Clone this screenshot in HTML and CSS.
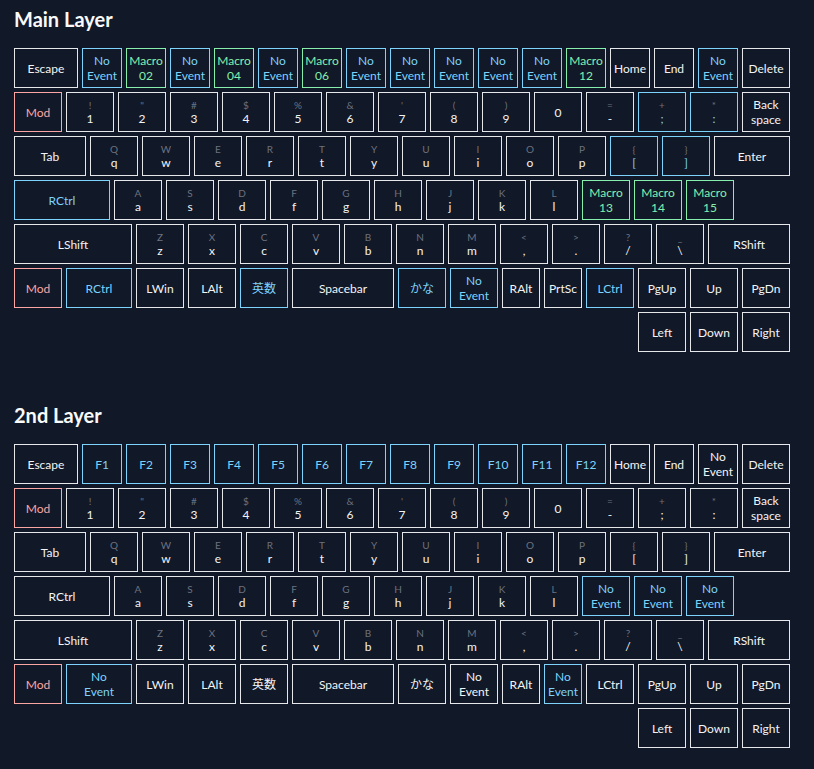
FILE: index.html
```html
<!DOCTYPE html>
<html lang="ja">
<head>
	<meta charset="UTF-8">
	<title>Keymap</title>
	<link rel="stylesheet" href="styles.css">
</head>
<body>

<div class="layer">
	<h2>Main Layer</h2>
	<div class="board">
		<div class="row">
			<div class="key w64">Escape</div>
			<div class="key w40 blue">No<br>Event</div>
			<div class="key w40 green">Macro<br>02</div>
			<div class="key w40 blue">No<br>Event</div>
			<div class="key w40 green">Macro<br>04</div>
			<div class="key w40 blue">No<br>Event</div>
			<div class="key w40 green">Macro<br>06</div>
			<div class="key w40 blue">No<br>Event</div>
			<div class="key w40 blue">No<br>Event</div>
			<div class="key w40 blue">No<br>Event</div>
			<div class="key w40 blue">No<br>Event</div>
			<div class="key w40 blue">No<br>Event</div>
			<div class="key w40 green">Macro<br>12</div>
			<div class="key w40">Home</div>
			<div class="key w40">End</div>
			<div class="key w40 blue">No<br>Event</div>
			<div class="key w48">Delete</div>
		</div>
		<div class="row">
			<div class="key w48 red">Mod</div>
			<div class="key w48"><span class="sub">!</span>1</div>
			<div class="key w48"><span class="sub">"</span>2</div>
			<div class="key w48"><span class="sub">#</span>3</div>
			<div class="key w48"><span class="sub">$</span>4</div>
			<div class="key w48"><span class="sub">%</span>5</div>
			<div class="key w48"><span class="sub">&amp;</span>6</div>
			<div class="key w48"><span class="sub">'</span>7</div>
			<div class="key w48"><span class="sub">(</span>8</div>
			<div class="key w48"><span class="sub">)</span>9</div>
			<div class="key w48">0</div>
			<div class="key w48"><span class="sub">=</span>-</div>
			<div class="key w48 blue"><span class="sub">+</span>;</div>
			<div class="key w48 blue"><span class="sub">*</span>:</div>
			<div class="key w48">Back<br>space</div>
		</div>
		<div class="row">
			<div class="key w72">Tab</div>
			<div class="key w48"><span class="sub">Q</span>q</div>
			<div class="key w48"><span class="sub">W</span>w</div>
			<div class="key w48"><span class="sub">E</span>e</div>
			<div class="key w48"><span class="sub">R</span>r</div>
			<div class="key w48"><span class="sub">T</span>t</div>
			<div class="key w48"><span class="sub">Y</span>y</div>
			<div class="key w48"><span class="sub">U</span>u</div>
			<div class="key w48"><span class="sub">I</span>i</div>
			<div class="key w48"><span class="sub">O</span>o</div>
			<div class="key w48"><span class="sub">P</span>p</div>
			<div class="key w48 blue"><span class="sub">{</span>[</div>
			<div class="key w48 blue"><span class="sub">}</span>]</div>
			<div class="key w76">Enter</div>
		</div>
		<div class="row">
			<div class="key w96 blue">RCtrl</div>
			<div class="key w48"><span class="sub">A</span>a</div>
			<div class="key w48"><span class="sub">S</span>s</div>
			<div class="key w48"><span class="sub">D</span>d</div>
			<div class="key w48"><span class="sub">F</span>f</div>
			<div class="key w48"><span class="sub">G</span>g</div>
			<div class="key w48"><span class="sub">H</span>h</div>
			<div class="key w48"><span class="sub">J</span>j</div>
			<div class="key w48"><span class="sub">K</span>k</div>
			<div class="key w48"><span class="sub">L</span>l</div>
			<div class="key w48 green">Macro<br>13</div>
			<div class="key w48 green">Macro<br>14</div>
			<div class="key w48 green">Macro<br>15</div>
		</div>
		<div class="row">
			<div class="key w118">LShift</div>
			<div class="key w48"><span class="sub">Z</span>z</div>
			<div class="key w48"><span class="sub">X</span>x</div>
			<div class="key w48"><span class="sub">C</span>c</div>
			<div class="key w48"><span class="sub">V</span>v</div>
			<div class="key w48"><span class="sub">B</span>b</div>
			<div class="key w48"><span class="sub">N</span>n</div>
			<div class="key w48"><span class="sub">M</span>m</div>
			<div class="key w48"><span class="sub">&lt;</span>,</div>
			<div class="key w48"><span class="sub">&gt;</span>.</div>
			<div class="key w48"><span class="sub">?</span>/</div>
			<div class="key w48"><span class="sub">_</span>\</div>
			<div class="key w82">RShift</div>
		</div>
		<div class="row">
			<div class="key w48 red">Mod</div>
			<div class="key w66 blue">RCtrl</div>
			<div class="key w48">LWin</div>
			<div class="key w48">LAlt</div>
			<div class="key w48 blue">英数</div>
			<div class="key w102">Spacebar</div>
			<div class="key w48 blue">かな</div>
			<div class="key w48 blue">No<br>Event</div>
			<div class="key w38">RAlt</div>
			<div class="key w38">PrtSc</div>
			<div class="key w48 blue">LCtrl</div>
			<div class="key w48">PgUp</div>
			<div class="key w48">Up</div>
			<div class="key w48">PgDn</div>
		</div>
		<div class="row arrows">
			<div class="key w48">Left</div>
			<div class="key w48">Down</div>
			<div class="key w48">Right</div>
		</div>
	</div>
</div>

<div class="layer">
	<h2>2nd Layer</h2>
	<div class="board">
		<div class="row">
			<div class="key w64">Escape</div>
			<div class="key w40 blue">F1</div>
			<div class="key w40 blue">F2</div>
			<div class="key w40 blue">F3</div>
			<div class="key w40 blue">F4</div>
			<div class="key w40 blue">F5</div>
			<div class="key w40 blue">F6</div>
			<div class="key w40 blue">F7</div>
			<div class="key w40 blue">F8</div>
			<div class="key w40 blue">F9</div>
			<div class="key w40 blue">F10</div>
			<div class="key w40 blue">F11</div>
			<div class="key w40 blue">F12</div>
			<div class="key w40">Home</div>
			<div class="key w40">End</div>
			<div class="key w40">No<br>Event</div>
			<div class="key w48">Delete</div>
		</div>
		<div class="row">
			<div class="key w48 red">Mod</div>
			<div class="key w48"><span class="sub">!</span>1</div>
			<div class="key w48"><span class="sub">"</span>2</div>
			<div class="key w48"><span class="sub">#</span>3</div>
			<div class="key w48"><span class="sub">$</span>4</div>
			<div class="key w48"><span class="sub">%</span>5</div>
			<div class="key w48"><span class="sub">&amp;</span>6</div>
			<div class="key w48"><span class="sub">'</span>7</div>
			<div class="key w48"><span class="sub">(</span>8</div>
			<div class="key w48"><span class="sub">)</span>9</div>
			<div class="key w48">0</div>
			<div class="key w48"><span class="sub">=</span>-</div>
			<div class="key w48"><span class="sub">+</span>;</div>
			<div class="key w48"><span class="sub">*</span>:</div>
			<div class="key w48">Back<br>space</div>
		</div>
		<div class="row">
			<div class="key w72">Tab</div>
			<div class="key w48"><span class="sub">Q</span>q</div>
			<div class="key w48"><span class="sub">W</span>w</div>
			<div class="key w48"><span class="sub">E</span>e</div>
			<div class="key w48"><span class="sub">R</span>r</div>
			<div class="key w48"><span class="sub">T</span>t</div>
			<div class="key w48"><span class="sub">Y</span>y</div>
			<div class="key w48"><span class="sub">U</span>u</div>
			<div class="key w48"><span class="sub">I</span>i</div>
			<div class="key w48"><span class="sub">O</span>o</div>
			<div class="key w48"><span class="sub">P</span>p</div>
			<div class="key w48"><span class="sub">{</span>[</div>
			<div class="key w48"><span class="sub">}</span>]</div>
			<div class="key w76">Enter</div>
		</div>
		<div class="row">
			<div class="key w96">RCtrl</div>
			<div class="key w48"><span class="sub">A</span>a</div>
			<div class="key w48"><span class="sub">S</span>s</div>
			<div class="key w48"><span class="sub">D</span>d</div>
			<div class="key w48"><span class="sub">F</span>f</div>
			<div class="key w48"><span class="sub">G</span>g</div>
			<div class="key w48"><span class="sub">H</span>h</div>
			<div class="key w48"><span class="sub">J</span>j</div>
			<div class="key w48"><span class="sub">K</span>k</div>
			<div class="key w48"><span class="sub">L</span>l</div>
			<div class="key w48 blue">No<br>Event</div>
			<div class="key w48 blue">No<br>Event</div>
			<div class="key w48 blue">No<br>Event</div>
		</div>
		<div class="row">
			<div class="key w118">LShift</div>
			<div class="key w48"><span class="sub">Z</span>z</div>
			<div class="key w48"><span class="sub">X</span>x</div>
			<div class="key w48"><span class="sub">C</span>c</div>
			<div class="key w48"><span class="sub">V</span>v</div>
			<div class="key w48"><span class="sub">B</span>b</div>
			<div class="key w48"><span class="sub">N</span>n</div>
			<div class="key w48"><span class="sub">M</span>m</div>
			<div class="key w48"><span class="sub">&lt;</span>,</div>
			<div class="key w48"><span class="sub">&gt;</span>.</div>
			<div class="key w48"><span class="sub">?</span>/</div>
			<div class="key w48"><span class="sub">_</span>\</div>
			<div class="key w82">RShift</div>
		</div>
		<div class="row">
			<div class="key w48 red">Mod</div>
			<div class="key w66 blue">No<br>Event</div>
			<div class="key w48">LWin</div>
			<div class="key w48">LAlt</div>
			<div class="key w48">英数</div>
			<div class="key w102">Spacebar</div>
			<div class="key w48">かな</div>
			<div class="key w48">No<br>Event</div>
			<div class="key w38">RAlt</div>
			<div class="key w38 blue">No<br>Event</div>
			<div class="key w48">LCtrl</div>
			<div class="key w48">PgUp</div>
			<div class="key w48">Up</div>
			<div class="key w48">PgDn</div>
		</div>
		<div class="row arrows">
			<div class="key w48">Left</div>
			<div class="key w48">Down</div>
			<div class="key w48">Right</div>
		</div>
	</div>
</div>

</body>
</html>
```

FILE: styles.css
```css
body,div,h2,span { margin:0; padding:0; }
html, body { background:#111827; }
body { color:#f3f4f6; font-family:Lato, "Noto Sans CJK JP", sans-serif; padding:0 14px; }

/* one block per layer: title + keyboard */
.layer {
	padding-top: 5px;
	margin-bottom: 44px;
}
.layer h2 {
	font-size: 20px;
	line-height: 28px;
	font-weight: 700;
	margin-bottom: 15px;
	color: #f9fafb;
}

.board {
	width: 776px;
	display: flex;
	flex-direction: column;
	gap: 4px;
}
.row {
	display: flex;
	gap: 4px;
}
.row.arrows { justify-content: flex-end; }

.key {
	box-sizing: border-box;
	height: 40px;
	flex: none;
	border: 1px solid #e5e7eb;
	display: flex;
	flex-direction: column;
	align-items: center;
	justify-content: center;
	text-align: center;
	font-size: 12px;
	line-height: 15px;
	color: #f3f4f6;
	white-space: nowrap;
}
.key .sub {
	display: block;
	font-size: 10px;
	line-height: 12px;
	color: #6b7280;
}

/* key colours */
.key.blue { border-color:#7dd3fc; color:#7dd3fc; }
.key.green { border-color:#86efac; color:#86efac; }
.key.red { border-color:#fca5a5; color:#fca5a5; }

/* key widths */
.w38 { width:38px; }
.w40 { width:40px; }
.w48 { width:48px; }
.w64 { width:64px; }
.w66 { width:66px; }
.w72 { width:72px; }
.w76 { width:76px; }
.w82 { width:82px; }
.w96 { width:96px; }
.w102 { width:102px; }
.w118 { width:118px; }
```
